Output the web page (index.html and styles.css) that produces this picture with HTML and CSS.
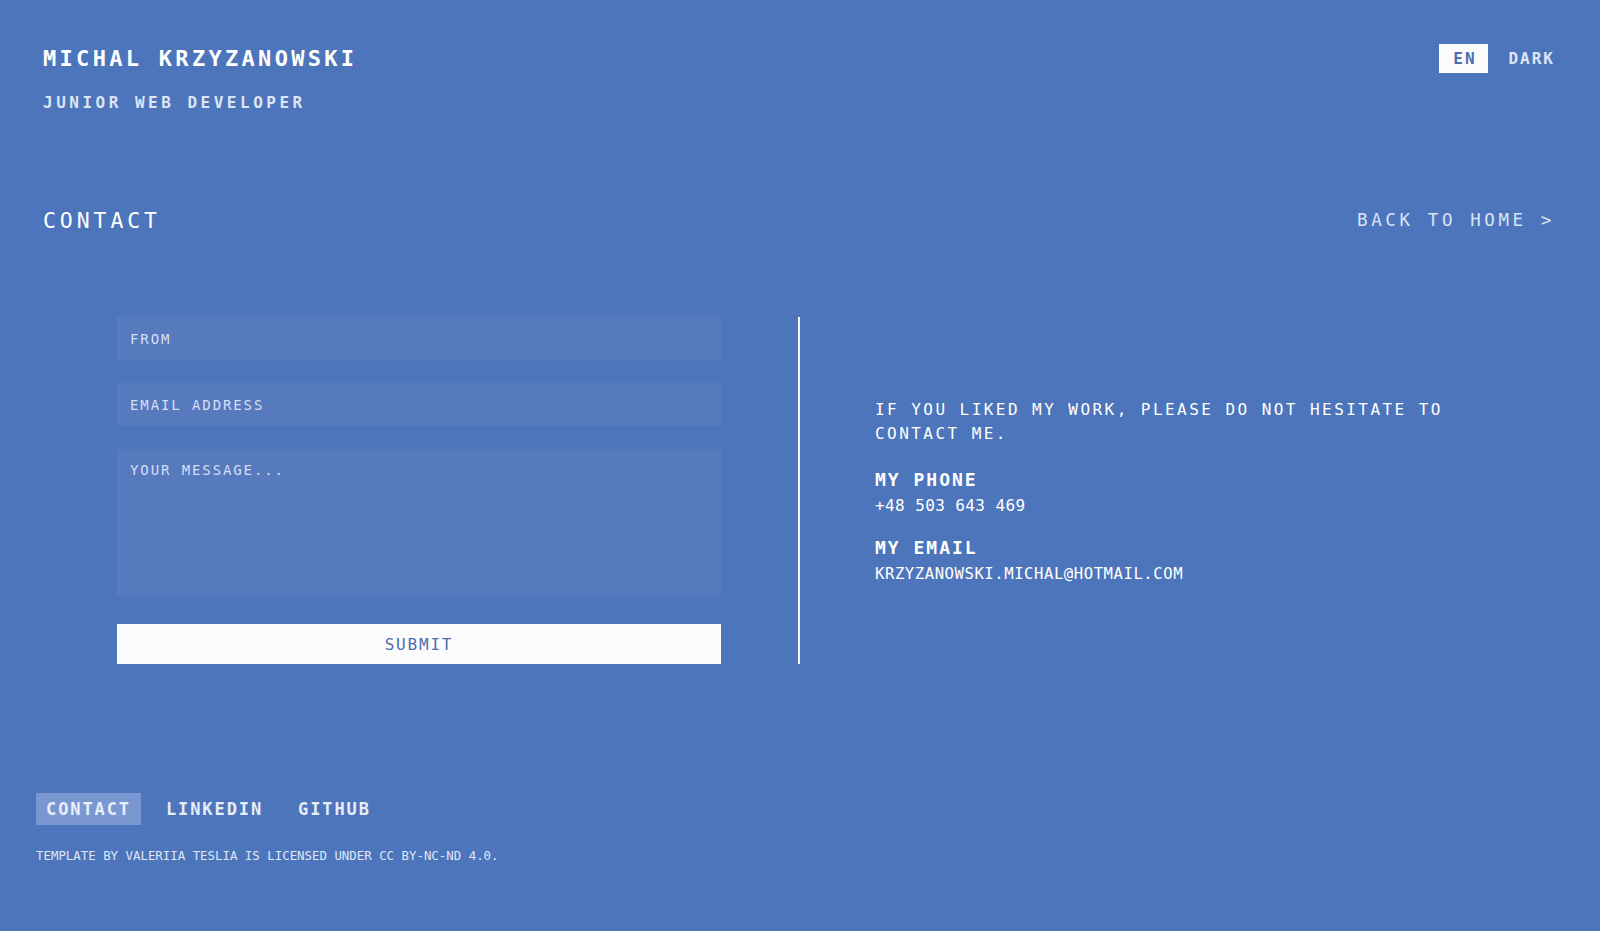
FILE: index.html
```html
<!DOCTYPE html>
<html lang="en">
<head>
<meta charset="utf-8">
<title>Contact - Michal Krzyzanowski</title>
<link rel="stylesheet" href="styles.css">
</head>
<body>
<div class="page">
  <header class="top">
    <div class="brand">
      <div class="name">MICHAL KRZYZANOWSKI</div>
      <div class="role">JUNIOR WEB DEVELOPER</div>
    </div>
    <div class="toggles">
      <span class="lang">EN</span>
      <span class="theme">DARK</span>
    </div>
  </header>

  <section class="title-row">
    <h1 class="title">CONTACT</h1>
    <a class="back" href="#">BACK TO HOME &gt;</a>
  </section>

  <main class="contact">
    <form class="form">
      <input class="field" type="text" placeholder="FROM">
      <input class="field" type="email" placeholder="EMAIL ADDRESS">
      <textarea class="field area" placeholder="YOUR MESSAGE..."></textarea>
      <button class="submit" type="button">SUBMIT</button>
    </form>
    <div class="divider"></div>
    <div class="info">
      <p class="lead">IF YOU LIKED MY WORK, PLEASE DO NOT HESITATE TO CONTACT ME.</p>
      <div class="group">
        <h2 class="label">MY PHONE</h2>
        <p class="value">+48 503 643 469</p>
      </div>
      <div class="group">
        <h2 class="label">MY EMAIL</h2>
        <p class="value email">KRZYZANOWSKI.MICHAL@HOTMAIL.COM</p>
      </div>
    </div>
  </main>

  <footer class="foot">
    <nav class="links">
      <a class="link active" href="#">CONTACT</a>
      <a class="link" href="#">LINKEDIN</a>
      <a class="link" href="#">GITHUB</a>
    </nav>
    <p class="license">TEMPLATE BY VALERIIA TESLIA IS LICENSED UNDER CC BY-NC-ND 4.0.</p>
  </footer>
</div>
</body>
</html>
```

FILE: styles.css
```css
* { box-sizing: border-box; }
html, body { margin: 0; padding: 0; }
body {
  background: #4d75bb;
  color: #ffffff;
  font-family: "DejaVu Sans Mono", "Liberation Mono", monospace;
  height: 931px;
  overflow: hidden;
}
.page {
  display: flex;
  flex-direction: column;
}
.top {
  display: flex;
  justify-content: space-between;
  align-items: flex-start;
  padding: 44px 45px 0 43px;
}
.name {
  font-size: 22px;
  font-weight: bold;
  letter-spacing: 3.3px;
  line-height: 30px;
}
.role {
  margin-top: 20px;
  font-size: 16px;
  font-weight: bold;
  letter-spacing: 3.5px;
  line-height: 18px;
  color: #dce5f6;
}
.toggles {
  display: flex;
  align-items: center;
  gap: 20px;
}
.lang {
  display: block;
  background: #fbfbfd;
  color: #4d6db0;
  width: 49px;
  height: 29px;
  line-height: 29px;
  text-align: center;
  font-size: 16px;
  font-weight: bold;
  letter-spacing: 2px;
  padding-left: 2px;
}
.theme {
  color: #dde6f7;
  font-size: 16px;
  font-weight: bold;
  letter-spacing: 2px;
}
.title-row {
  display: flex;
  justify-content: space-between;
  align-items: center;
  padding: 0 45px 0 43px;
  margin-top: 90px;
  height: 36px;
}
.title {
  margin: 0;
  font-size: 21.5px;
  font-weight: normal;
  letter-spacing: 3.9px;
}
.back {
  color: #d9e3f6;
  text-decoration: none;
  font-size: 17.5px;
  letter-spacing: 3.6px;
}
.contact {
  display: flex;
  align-items: stretch;
  margin-top: 79px;
  padding-left: 117px;
}
.form {
  width: 604px;
  display: flex;
  flex-direction: column;
}
.field {
  display: block;
  width: 100%;
  border: none;
  outline: none;
  background: #5779be;
  color: #ffffff;
  font-family: "DejaVu Sans Mono", "Liberation Mono", monospace;
  font-size: 14px;
  letter-spacing: 1.9px;
  height: 43px;
  padding: 0 13px;
  margin: 0 0 23px 0;
}
.field::placeholder { color: #d5dff3; opacity: 1; }
.area {
  height: 148px;
  padding-top: 13px;
  resize: none;
  margin-bottom: 27px;
}
.submit {
  display: block;
  width: 100%;
  height: 40px;
  border: none;
  background: #fbfbfb;
  color: #4c6cad;
  font-family: "DejaVu Sans Mono", "Liberation Mono", monospace;
  font-size: 16px;
  letter-spacing: 1.8px;
  padding: 0;
}
.divider {
  width: 2px;
  background: #f3f6fc;
  margin-left: 77px;
}
.info {
  margin-left: 75px;
  display: flex;
  flex-direction: column;
  justify-content: center;
  padding-top: 1px;
}
.lead {
  margin: 0;
  width: 590px;
  font-size: 16px;
  letter-spacing: 2.45px;
  line-height: 24.5px;
}
.group { margin-top: 22px; }
.group + .group { margin-top: 20px; }
.label {
  margin: 0;
  font-size: 18px;
  font-weight: bold;
  letter-spacing: 2px;
  line-height: 22px;
}
.value {
  margin: 4px 0 0 0;
  font-size: 16px;
  letter-spacing: 0.4px;
  line-height: 22px;
}
.value.email {
  font-size: 15.6px;
  letter-spacing: 0.55px;
}
.foot {
  margin-top: 129px;
  padding-left: 36px;
}
.links {
  display: flex;
  align-items: center;
  gap: 15px;
}
.link {
  display: block;
  color: #e6ecf8;
  text-decoration: none;
  font-size: 17px;
  font-weight: bold;
  letter-spacing: 1.9px;
  height: 32px;
  line-height: 32px;
  padding: 0 10px;
}
.link.active {
  background: #7b97d1;
  color: #e9eef9;
}
.license {
  margin: 23px 0 0 0;
  font-size: 12.4px;
  letter-spacing: 0;
  color: #dfe7f7;
}
```
